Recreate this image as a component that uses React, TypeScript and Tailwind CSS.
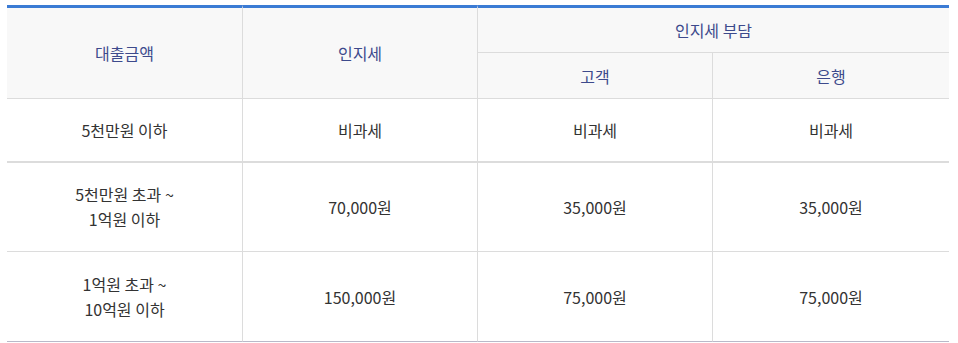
import * as React from "react";

const rows = [
  { amount: ["5천만원 이하"], tax: "비과세", customer: "비과세", bank: "비과세" },
  { amount: ["5천만원 초과 ~", "1억원 이하"], tax: "70,000원", customer: "35,000원", bank: "35,000원" },
  { amount: ["1억원 초과 ~", "10억원 이하"], tax: "150,000원", customer: "75,000원", bank: "75,000원" },
];

export default function App() {
  return (
    <div className="w-[958px] h-[343px] bg-white pt-[5px] pl-[7px] font-['Noto_Sans_CJK_KR','Noto_Sans',sans-serif] text-[16px]">
      <table className="w-[942px] table-fixed border-separate border-spacing-0 text-center">
        <colgroup>
          <col className="w-[236px]" />
          <col className="w-[235px]" />
          <col className="w-[235px]" />
          <col className="w-[236px]" />
        </colgroup>
        <thead className="text-[#3d4a8c]">
          <tr>
            <th rowSpan={2} className="h-[48px] bg-[#f8f8f8] border-t-[3px] border-t-[#3b7bd4] border-r border-b border-[#dcdcdc] font-normal align-middle">
              대출금액
            </th>
            <th rowSpan={2} className="bg-[#f8f8f8] border-t-[3px] border-t-[#3b7bd4] border-r border-b border-[#dcdcdc] font-normal align-middle">
              인지세
            </th>
            <th colSpan={2} className="h-[48px] bg-[#f8f8f8] border-t-[3px] border-t-[#3b7bd4] border-b border-[#dcdcdc] font-normal align-middle">
              인지세 부담
            </th>
          </tr>
          <tr>
            <th className="h-[46px] bg-[#f8f8f8] border-r border-b border-[#dcdcdc] font-normal align-middle">고객</th>
            <th className="h-[46px] bg-[#f8f8f8] border-b border-[#dcdcdc] font-normal align-middle">은행</th>
          </tr>
        </thead>
        <tbody className="text-[#333333]">
          {rows.map((r, i) => {
            const rowCls =
              i === 0
                ? "h-[64px] border-b-2 border-[#dcdcdc]"
                : i === 1
                ? "h-[89px] border-b border-[#dcdcdc]"
                : "h-[90px] border-b border-b-[#b9b9c9] border-[#dcdcdc]";
            return (
              <tr key={i}>
                <td className={`${rowCls} border-r leading-[25px] align-middle`}>
                  {r.amount.map((l, j) => (
                    <div key={j}>{l}</div>
                  ))}
                </td>
                <td className={`${rowCls} border-r align-middle`}>{r.tax}</td>
                <td className={`${rowCls} border-r align-middle`}>{r.customer}</td>
                <td className={`${rowCls} align-middle`}>{r.bank}</td>
              </tr>
            );
          })}
        </tbody>
      </table>
    </div>
  );
}
